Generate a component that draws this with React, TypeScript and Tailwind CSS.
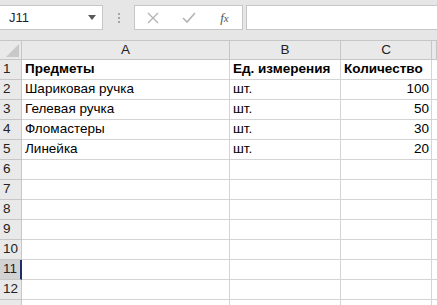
import React from "react";

const rows: [string, string, string][] = [
  ["Предметы", "Ед. измерения", "Количество"],
  ["Шариковая ручка", "шт.", "100"],
  ["Гелевая ручка", "шт.", "50"],
  ["Фломастеры", "шт.", "30"],
  ["Линейка", "шт.", "20"],
];

export default function App() {
  const all = Array.from({ length: 13 }, (_, i) => rows[i] ?? ["", "", ""]);

  return (
    <div className="w-[437px] h-[305px] overflow-hidden bg-white text-[13.5px] text-black" style={{ fontFamily: '"Liberation Sans", Arial, sans-serif' }}>
      {/* formula bar */}
      <div className="h-[40px] bg-[#e6e6e6] flex items-start pt-[5px]">
        <div className="w-[103px] h-[25px] bg-white border-y border-r border-[#c6c6c6] flex items-center justify-between pl-[9px] pr-[6px]">
          <span className="text-[13px] text-[#1f1f3f]">J11</span>
          <svg width="8" height="5" viewBox="0 0 8 5">
            <path d="M0 0h8L4 5z" fill="#595959" />
          </svg>
        </div>
        <div className="w-[31px] h-[25px] flex flex-col items-center justify-center gap-[2px]">
          <span className="w-[2px] h-[2px] bg-[#a6a6a6]" />
          <span className="w-[2px] h-[2px] bg-[#a6a6a6]" />
          <span className="w-[2px] h-[2px] bg-[#a6a6a6]" />
        </div>
        <div className="w-[109px] h-[25px] bg-white border border-[#c6c6c6] flex items-center">
          <div className="w-[36px] flex justify-center">
            <svg width="12" height="12" viewBox="0 0 12 12">
              <path d="M1 1l10 10M11 1L1 11" stroke="#b3b3b3" strokeWidth="1.4" />
            </svg>
          </div>
          <div className="w-[36px] flex justify-center">
            <svg width="14" height="12" viewBox="0 0 14 12">
              <path d="M1 6l4 4 8-9" stroke="#b3b3b3" strokeWidth="1.6" fill="none" />
            </svg>
          </div>
          <div className="flex-1 flex justify-center">
            <span className="italic text-[13px] text-[#555]" style={{ fontFamily: '"Liberation Serif", serif' }}>
              f<span className="text-[11px]">x</span>
            </span>
          </div>
        </div>
        <div className="ml-[3px] flex-1 h-[25px] bg-white border-y border-l border-[#c6c6c6]" />
      </div>

      {/* grid */}
      <div className="grid grid-cols-[22px_208px_111px_91px_1fr] border-t border-[#c6c6c6]">
        <div className="h-[19px] bg-[#e9e9e9] border-r border-b border-[#c6c6c6] flex items-end justify-end pr-[2px] pb-[2px]">
          <svg width="13" height="13" viewBox="0 0 13 13">
            <path d="M13 0V13H0z" fill="#c8c8c8" />
          </svg>
        </div>
        {["A", "B", "C", ""].map((l, i) => (
          <div key={i} className="h-[19px] bg-[#e9e9e9] border-r border-b border-[#c6c6c6] flex items-center justify-center text-[#222]">
            {l}
          </div>
        ))}
        {all.map((r, i) => {
          const sel = i === 10;
          return (
            <React.Fragment key={i}>
              <div
                className={`h-[20px] border-b border-[#c6c6c6] flex items-center pl-[3px] text-[#222] ${
                  sel ? "bg-[#d2d2d2] border-r-2 border-r-[#1f2f6e]" : "bg-[#e9e9e9] border-r"
                }`}
              >
                {i < 12 ? i + 1 : ""}
              </div>
              <div className={`h-[20px] border-r border-b border-[#d4d4d4] flex items-center pl-[3px] ${i === 0 ? "font-bold" : ""}`}>{r[0]}</div>
              <div className={`h-[20px] border-r border-b border-[#d4d4d4] flex items-center pl-[3px] ${i === 0 ? "font-bold" : ""}`}>{r[1]}</div>
              <div className={`h-[20px] border-r border-b border-[#d4d4d4] flex items-center ${i === 0 ? "font-bold pl-[3px]" : "justify-end pr-[2px]"}`}>{r[2]}</div>
              <div className="h-[20px] border-b border-[#d4d4d4]" />
            </React.Fragment>
          );
        })}
      </div>
    </div>
  );
}
